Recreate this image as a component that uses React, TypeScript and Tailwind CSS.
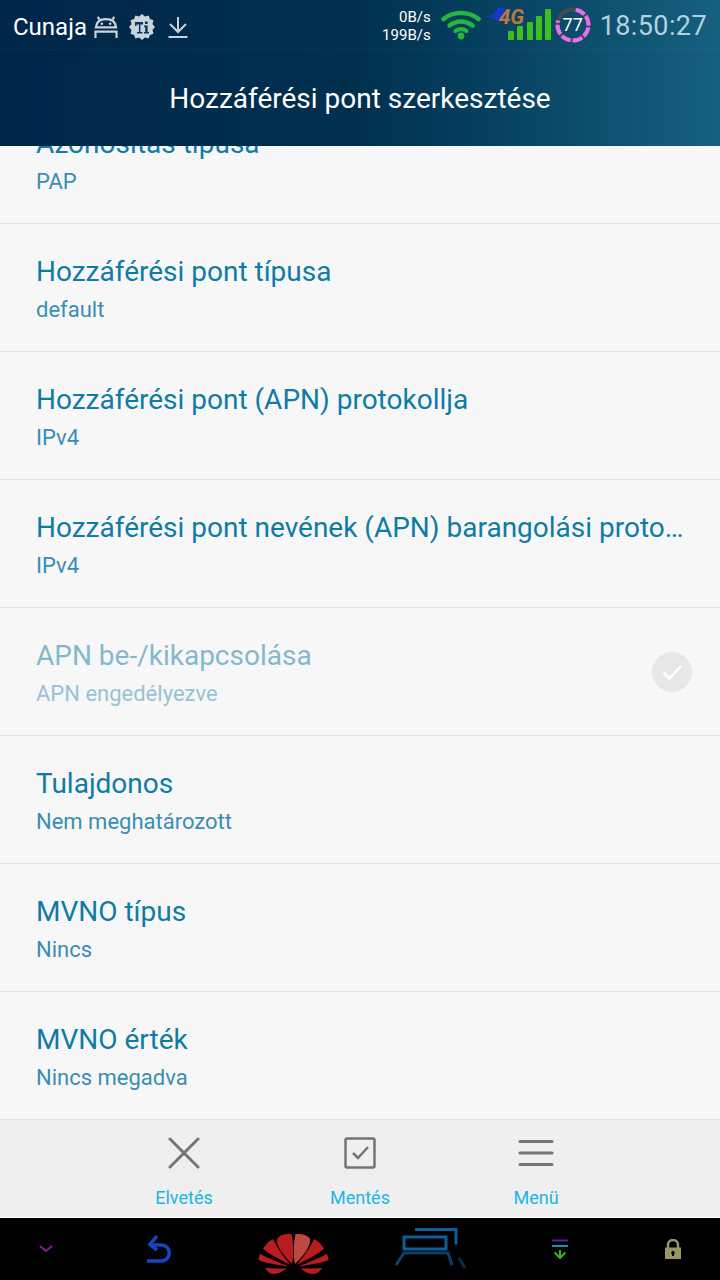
const rows = [
  { title: "Hozzáférési pont típusa", sub: "default" },
  { title: "Hozzáférési pont (APN) protokollja", sub: "IPv4" },
  { title: "Hozzáférési pont nevének (APN) barangolási protokollja", sub: "IPv4" },
  { title: "APN be-/kikapcsolása", sub: "APN engedélyezve", disabled: true },
  { title: "Tulajdonos", sub: "Nem meghatározott" },
  { title: "MVNO típus", sub: "Nincs" },
  { title: "MVNO érték", sub: "Nincs megadva" },
];

const AndroidIcon = () => (
  <svg width="24" height="22" viewBox="0 0 26 24" fill="none" stroke="#c9d3dc" strokeWidth="2.400">
    <path d="M2 12.500C2.500 6.500 7 3.500 13 3.500s10.500 3 11 9z" />
    <path d="M6 4 4 1M20 4l2-3" />
    <circle cx="8.500" cy="8.500" r="1.400" fill="#c9d3dc" stroke="none" />
    <circle cx="17.500" cy="8.500" r="1.400" fill="#c9d3dc" stroke="none" />
    <path d="M1.500 24v-7h23v7" />
  </svg>
);

const TiIcon = () => (
  <svg width="26" height="26" viewBox="0 0 26 26">
    <path
      d="M13 0l3 2.500 3.700-1 1.200 3.600 3.600 1.200-1 3.700L26 13l-2.500 3 1 3.700-3.600 1.200-1.200 3.600-3.700-1L13 26l-3-2.500-3.700 1-1.200-3.600-3.600-1.200 1-3.700L0 13l2.500-3-1-3.700 3.600-1.200 1.200-3.600 3.700 1z"
      fill="#c9d3dc"
    />
    <path d="M6 8h8v2.500h-2.600V18h2v1.500H8V18h1.900v-7.500H7.500V12H6z" fill="#0c3454" />
    <rect x="16" y="7.500" width="2.600" height="2.500" fill="#0c3454" />
    <path d="M15 11.500h3.600V18H20v1.500h-5V18h1.200v-5H15z" fill="#0c3454" />
  </svg>
);

const DownloadIcon = () => (
  <svg width="20" height="22" viewBox="0 0 20 22" fill="none" stroke="#c9d3dc" strokeWidth="2">
    <path d="M10 1v14M2 8l8 8 8-8" />
    <path d="M0.500 21h19" />
  </svg>
);

const WifiIcon = () => (
  <svg width="40" height="30" viewBox="0 0 40 30" fill="none" stroke="#22b83f" strokeLinecap="round">
    <path d="M2.500 9C12 1 28 1 37.500 9" strokeWidth="4.500" />
    <path d="M8.500 15.500c7-5.500 16-5.500 23 0" strokeWidth="4.500" />
    <path d="M14.500 21c3.500-2.500 7.500-2.500 11 0" strokeWidth="4" />
    <circle cx="20" cy="26" r="3.400" fill="#22b83f" stroke="none" />
  </svg>
);

const SignalIcon = () => (
  <div className="relative mb-[14px] h-[40px] w-[66px] shrink-0">
    <svg width="66" height="40" viewBox="0 0 66 40" className="absolute top-0 left-0">
      <path d="M0 17l8-3 5-6 8-1-2 5 5 1-5 5 3 2-9 2-5-4z" fill="#1438c8" />
      <rect x="23" y="31" width="6" height="9" rx="1" fill="#3ec01c" />
      <rect x="32" y="26" width="6" height="14" rx="1" fill="#3ec01c" />
      <rect x="42" y="22" width="6" height="18" rx="1" fill="#3ec01c" />
      <rect x="51" y="16" width="6" height="24" rx="1" fill="#3ec01c" />
      <rect x="60" y="9" width="6" height="31" rx="1" fill="#3ec01c" />
    </svg>
    <span className="absolute top-[6px] left-[14px] text-[21px] leading-[22px] font-bold italic text-[#b87a3e]">
      4G
    </span>
  </div>
);

const BatteryRing = () => (
  <div className="relative mb-[4px] h-[36px] w-[36px] shrink-0">
    <svg width="36" height="36" viewBox="0 0 36 36" fill="none" className="absolute top-0 left-0">
      <circle cx="18" cy="18" r="15.500" stroke="#4a4a4a" strokeWidth="4" />
      <circle
        cx="18"
        cy="18"
        r="15.500"
        stroke="#ea6ff0"
        strokeWidth="4"
        strokeDasharray="10 2 10 2 10 2 10 2 10 2 10 2 2.500 30"
        transform="rotate(-80 18 18)"
      />
    </svg>
    <span className="absolute inset-0 flex items-center justify-center text-[18px] text-white">77</span>
  </div>
);

const StatusBar = () => (
  <div className="flex h-[50px] items-center border-b border-white/[0.03] px-[13px] pt-[4px]">
    <span className="text-[24px] text-white">Cunaja</span>
    <div className="ml-[7px]">
      <AndroidIcon />
    </div>
    <div className="ml-[11px]">
      <TiIcon />
    </div>
    <div className="ml-[13px]">
      <DownloadIcon />
    </div>
    <div className="mb-[2px] ml-auto flex flex-col items-end text-[15px] leading-[18px] text-white">
      <span>0B/s</span>
      <span>199B/s</span>
    </div>
    <div className="mb-[4px] ml-[10px]">
      <WifiIcon />
    </div>
    <div className="ml-[4px]">
      <SignalIcon />
    </div>
    <div className="ml-[4px]">
      <BatteryRing />
    </div>
    <span className="ml-[9px] text-[27px] tracking-[0.4px] text-[#b5d0de]">18:50:27</span>
  </div>
);

const Row = ({ title, sub, disabled }: { title: string; sub: string; disabled?: boolean }) => (
  <div className="flex h-[128px] shrink-0 items-center border-b border-[#dfdfdf] pt-[3px] pr-[28px] pl-[36px]">
    <div className={"min-w-0 flex-1 " + (disabled ? "opacity-50" : "")}>
      <div className="truncate text-[28px] leading-[36px] text-[#0f7ba6]">{title}</div>
      <div className="mt-[6px] text-[22px] leading-[28px] text-[#3a8eb3]">{sub}</div>
    </div>
    {disabled && (
      <div className="mb-[3px] ml-4 flex h-[40px] w-[40px] items-center justify-center rounded-full bg-[#e7e7e7]">
        <svg width="22" height="22" viewBox="0 0 22 22" fill="none" stroke="#fff" strokeWidth="2.500">
          <path d="M2.500 11.500l6 6L20 5" />
        </svg>
      </div>
    )}
  </div>
);

const BottomAction = ({ label, children }: { label: string; children: React.ReactNode }) => (
  <div className="flex w-[176px] flex-col items-center">
    <div className="flex h-[44px] items-center justify-center">{children}</div>
    <span className="mt-[11px] text-[18px] leading-[24px] text-[#22b4e6]">{label}</span>
  </div>
);

const HuaweiLogo = () => {
  // left half of the petals, mirrored for the right side
  const petals = (
    <>
      <path d="M33.500 32C24 27 11 21 6 15.500 9 11 12 8 16 6c4 9 11 18 17.500 26z" />
      <path d="M31.500 33.500C22 32 7 30 1.500 27c0-2 .5-4 1.500-6 8 4 20 9 28.500 12.500z" />
      <path d="M29.500 35.500c-7.500 0-14.500 0-21.500-.5 2 3 4 6 9 6 5 0 9-3 12.500-5.500z" />
    </>
  );
  return (
    <svg width="72" height="42" viewBox="0 0 72 42">
      <g fill="#b81c1f">
        {petals}
        <path d="M35 31C28 24 19 14 20 6c2-4 8-5.500 14.500-5 2 10 2.500 21 .5 30z" />
        <g transform="matrix(-1 0 0 1 73 0)">
          {petals}
          <path d="M35 31C28 24 19 14 20 6c2-4 8-5.500 14.500-5 2 10 2.500 21 .5 30z" fill="#bd4a40" />
        </g>
      </g>
    </svg>
  );
};

const NavBar = () => (
  <div className="flex h-[62px] items-center bg-black">
    <div className="flex w-[92px] justify-center">
      <svg width="14" height="8" viewBox="0 0 14 8" fill="none" stroke="#8a1a9c" strokeWidth="2">
        <path d="M1 1l6 5 6-5" />
      </svg>
    </div>
    <div className="ml-[22px] flex w-[92px] justify-center">
      <svg width="26" height="28" viewBox="0 0 26 28" fill="none" stroke="#1246c4" strokeWidth="3.500">
        <path d="M0 26h14c11 0 11-16 0-16H3" />
        <path d="M10 1 3 9.500l7 5.500" />
      </svg>
    </div>
    <div className="ml-[41px] flex w-[92px] justify-center pt-[10px]">
      <HuaweiLogo />
    </div>
    <div className="ml-[55px] flex w-[72px] justify-center">
      <svg width="72" height="42" viewBox="0 0 72 42" fill="none" stroke="#0d5f96" strokeWidth="3">
        <path d="M21 1.500h41v15" />
        <rect x="10" y="9" width="42" height="12" />
        <path d="M2 37l8-12h44l4 12" stroke="#0b3f66" />
        <path d="M65 30l6 10" stroke="#0a2c44" />
      </svg>
    </div>
    <div className="ml-[76px] flex w-[36px] justify-center">
      <svg width="18" height="20" viewBox="0 0 18 20" fill="none" strokeWidth="2">
        <path d="M1 1.500h16" stroke="#4b1fb0" />
        <path d="M1 7h16" stroke="#1a8bb5" />
        <path d="M9 11v8M3.500 13.500 9 19l5.500-5.500" stroke="#38b41c" />
      </svg>
    </div>
    <div className="ml-[85px] flex w-[20px] justify-center">
      <svg width="18" height="20" viewBox="0 0 18 20">
        <path d="M4 9V6a5 5 0 0 1 10 0v3" fill="none" stroke="#9a9566" strokeWidth="2.500" />
        <path fillRule="evenodd" d="M1 8.500h16V20H1zM9 12a1.800 1.800 0 0 0-1 3.300V17h2v-1.700A1.800 1.800 0 0 0 9 12z" fill="#9a9566" />
      </svg>
    </div>
  </div>
);

export default function App() {
  return (
    <div className="flex h-[1280px] w-[720px] flex-col overflow-hidden bg-[#f7f7f7] font-['Roboto',sans-serif]">
      <header className="relative z-10 h-[146px] shrink-0 bg-gradient-to-r from-[#00264a] via-[#01304f] to-[#16607f]">
        <StatusBar />
        <div className="flex h-[96px] items-center justify-center pt-[2px] text-[28px] text-white">
          Hozzáférési pont szerkesztése
        </div>
      </header>
      <main className="flex min-h-0 flex-1 flex-col overflow-hidden">
        <div className="mt-[-50px] flex flex-col">
          <Row title="Azonosítás típusa" sub="PAP" />
          {rows.map((r) => (
            <Row key={r.title} title={r.title} sub={r.sub} disabled={r.disabled} />
          ))}
        </div>
      </main>
      <div className="flex h-[97px] shrink-0 justify-center bg-[#efefef] pt-[11px]">
        <BottomAction label="Elvetés">
          <svg width="32" height="32" viewBox="0 0 32 32" fill="none" stroke="#757575" strokeWidth="3" strokeLinecap="round">
            <path d="M2 2l28 28M30 2L2 30" />
          </svg>
        </BottomAction>
        <BottomAction label="Mentés">
          <svg width="32" height="32" viewBox="0 0 32 32" fill="none" stroke="#757575" strokeWidth="2.500">
            <rect x="1.500" y="1.500" width="29" height="29" rx="1.500" />
            <path d="M9 16l5 5 10-11" />
          </svg>
        </BottomAction>
        <BottomAction label="Menü">
          <svg width="36" height="28" viewBox="0 0 36 28" fill="none" stroke="#757575" strokeWidth="3" strokeLinecap="round">
            <path d="M2 2.500h32M2 14h32M2 25.500h32" />
          </svg>
        </BottomAction>
      </div>
      <div className="h-[1px] shrink-0 bg-white" />
      <NavBar />
    </div>
  );
}
